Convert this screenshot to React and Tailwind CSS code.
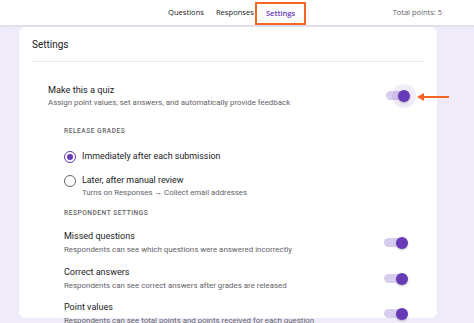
import React from 'react';

function Toggle({ halo = false }) {
  return (
    <div className="relative w-[24px] h-[14px] flex items-center shrink-0">
      <div className="w-[20px] h-[9px] rounded-full bg-[#d9cdef]" />
      {halo && (
        <div className="absolute right-[-6px] top-1/2 -translate-y-1/2 w-[24px] h-[24px] rounded-full bg-[#673ab7]/10" />
      )}
      <div className="absolute right-0 top-1/2 -translate-y-1/2 w-[12px] h-[12px] rounded-full bg-[#673ab7] shadow-[0_1px_2px_rgba(0,0,0,0.25)]" />
    </div>
  );
}

function Radio({ checked }) {
  return (
    <div
      className={
        checked
          ? 'w-[12px] h-[12px] rounded-full border-[1.5px] border-[#673ab7] flex items-center justify-center shrink-0'
          : 'w-[12px] h-[12px] rounded-full border-[1.5px] border-[#5f6368] shrink-0'
      }
    >
      {checked && <div className="w-[6px] h-[6px] rounded-full bg-[#673ab7]" />}
    </div>
  );
}

function SettingRow({ title, sub, className = '' }) {
  return (
    <div className={`flex items-center justify-between ${className}`}>
      <div>
        <div className="text-[9px] leading-[13px] text-[#202124]">{title}</div>
        <div className="mt-[1px] text-[7.9px] leading-[11px] text-[#5f6368]">{sub}</div>
      </div>
      <Toggle />
    </div>
  );
}

export default function App() {
  return (
    <div className="w-[474px] h-[323px] overflow-hidden bg-[#f0ebf8] font-['Roboto','Liberation_Sans',sans-serif]">
      {/* Top tabs */}
      <div className="relative h-[25px] bg-white flex items-center shadow-[0_1px_2px_rgba(60,64,67,0.15)] font-['Open_Sans','Roboto',sans-serif]">
        <div className="flex items-center pl-[168px] text-[7.6px] text-[#202124] font-medium">
          <span>Questions</span>
          <span className="ml-[12px]">Responses</span>
          <span className="ml-[1px] h-[23px] mt-[2px] px-[9px] flex items-center border-2 border-[#f26522] text-[#673ab7] font-semibold">
            Settings
          </span>
        </div>
        <span className="ml-auto pr-[32px] text-[7.5px] text-[#5f6368]">Total points: 5</span>
      </div>

      {/* Card */}
      <div className="relative ml-[19px] mt-[2px] w-[418px] h-[291px] bg-white rounded-[6px] px-[13px] pt-[11px]">
        <div className="text-[10px] leading-[14px] text-[#202124]">Settings</div>
        <div className="mt-[9px] h-px bg-[#e8eaed]" />

        <div className="mt-[21px] pl-[16px] pr-[14px]">
          <div className="flex items-center justify-between">
            <div>
              <div className="text-[9.2px] leading-[13px] text-[#202124]">Make this a quiz</div>
              <div className="mt-[1px] text-[7.9px] leading-[11px] text-[#5f6368]">
                Assign point values, set answers, and automatically provide feedback
              </div>
            </div>
            <Toggle halo />
          </div>

          <div className="pl-[16px] pr-[2px]">
            <div className="mt-[18px] text-[6.6px] leading-[10px] tracking-[0.08em] font-medium text-[#5f6368]">
              RELEASE GRADES
            </div>

            <div className="mt-[14px] flex items-center">
              <Radio checked />
              <span className="ml-[6px] text-[8.9px] leading-[13px] text-[#202124]">Immediately after each submission</span>
            </div>

            <div className="mt-[11px] flex items-start">
              <div className="pt-[0.5px]">
                <Radio />
              </div>
              <div className="ml-[6px]">
                <div className="text-[8.9px] leading-[13px] text-[#202124]">Later, after manual review</div>
                <div className="text-[7.8px] leading-[11px] text-[#5f6368]">Turns on Responses → Collect email addresses</div>
              </div>
            </div>

            <div className="mt-[10px] text-[6.6px] leading-[10px] tracking-[0.08em] font-medium text-[#5f6368]">
              RESPONDENT SETTINGS
            </div>

            <SettingRow
              className="mt-[12px]"
              title="Missed questions"
              sub="Respondents can see which questions were answered incorrectly"
            />
            <SettingRow
              className="mt-[11px]"
              title="Correct answers"
              sub="Respondents can see correct answers after grades are released"
            />
            <SettingRow
              className="mt-[10px]"
              title="Point values"
              sub="Respondents can see total points and points received for each question"
            />
          </div>
        </div>
      </div>

      {/* Annotation arrow */}
      <svg className="absolute left-[416px] top-[91px]" width="34" height="12" viewBox="0 0 34 12">
        <line x1="6" y1="6" x2="33" y2="6" stroke="#f26522" strokeWidth="2" />
        <path d="M1 6 L8 2 L8 10 Z" fill="#f26522" />
      </svg>
    </div>
  );
}
